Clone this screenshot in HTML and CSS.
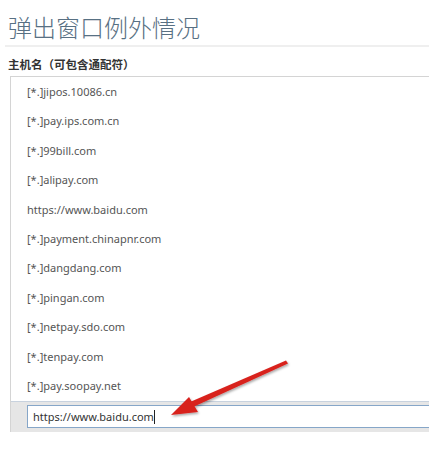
FILE: index.html
```html
<!DOCTYPE html>
<html lang="zh-CN">
<head>
<meta charset="utf-8">
<title>弹出窗口例外情况</title>
<link rel="stylesheet" href="styles.css">
</head>
<body>
<div class="page">
  <h1 class="title">弹出窗口例外情况</h1>
  <div class="sep"></div>
  <div class="label">主机名（可包含通配符）</div>
  <div class="list">
    <div class="row">[*.]jipos.10086.cn</div>
    <div class="row">[*.]pay.ips.com.cn</div>
    <div class="row">[*.]99bill.com</div>
    <div class="row">[*.]alipay.com</div>
    <div class="row">https://www.baidu.com</div>
    <div class="row">[*.]payment.chinapnr.com</div>
    <div class="row">[*.]dangdang.com</div>
    <div class="row">[*.]pingan.com</div>
    <div class="row">[*.]netpay.sdo.com</div>
    <div class="row">[*.]tenpay.com</div>
    <div class="row">[*.]pay.soopay.net</div>
    <div class="edit-row">
      <div class="input"><span>https://www.baidu.com</span><span class="caret"></span></div>
    </div>
  </div>
  <svg class="arrow" width="429" height="453" viewBox="0 0 429 453">
    <defs>
      <filter id="sh" x="-20%" y="-20%" width="140%" height="140%">
        <feDropShadow dx="1" dy="1.5" stdDeviation="1.2" flood-color="#000" flood-opacity="0.35"/>
      </filter>
    </defs>
    <g filter="url(#sh)">
      <polygon points="286,360.5 288,363.5 193,407 190,402" fill="#d8221e"/>
      <polygon points="171,415 189,397 198,412" fill="#d8221e"/>
    </g>
  </svg>
</div>
</body>
</html>
```

FILE: styles.css
```css
html, body {
  margin: 0;
  padding: 0;
  background: #ffffff;
  overflow: hidden;
}
.page {
  position: relative;
  width: 429px;
  height: 453px;
  overflow: hidden;
  font-family: "Noto Sans", "Noto Sans CJK SC", sans-serif;
}
.title {
  margin: 0;
  padding: 10px 0 0 8px;
  height: 35px;
  font-family: "Noto Sans CJK SC", sans-serif;
  font-weight: 300;
  font-size: 24px;
  line-height: 34px;
  color: #587083;
  letter-spacing: 0;
}
.sep {
  margin-left: 5px;
  height: 2px;
  background: #efefef;
}
.label {
  padding-left: 8px;
  margin-top: 7px;
  height: 22px;
  font-family: "Noto Sans CJK SC", sans-serif;
  font-weight: 700;
  font-size: 11.5px;
  line-height: 20px;
  color: #333;
}
.list {
  margin-left: 10px;
  width: 460px;
  border: 1px solid #d4d4d4;
  border-bottom: none;
}
.row {
  height: 29.4px;
  line-height: 29px;
  padding-left: 16px;
  font-size: 11px;
  color: #555;
  white-space: nowrap;
}
.edit-row {
  margin-top: 1px;
  background: #e6e6e6;
  padding: 3px 0 4px 16px;
  border-top: 1px solid #c8d2de;
}
.input {
  height: 21px;
  border: 1px solid #86a6c8;
  background: #fff;
  padding-left: 5px;
  font-size: 11px;
  line-height: 21px;
  color: #333;
  display: flex;
  align-items: center;
}
.caret {
  display: inline-block;
  width: 1px;
  height: 14px;
  background: #222;
}
.arrow {
  position: absolute;
  left: 0;
  top: 0;
  pointer-events: none;
}
```
